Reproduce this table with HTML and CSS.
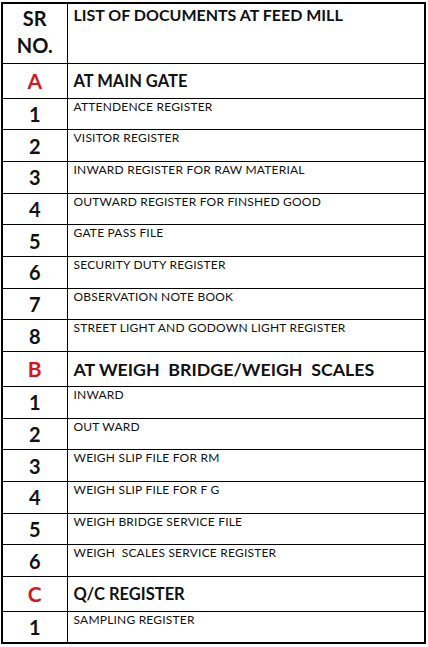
FILE: index.html
```html
<!DOCTYPE html>
<html>
<head>
<meta charset="utf-8">
<link rel="stylesheet" href="styles.css">
</head>
<body>
<table class="docs">
  <colgroup><col class="c-no"><col class="c-item"></colgroup>
  <tr class="head">
    <td class="no">SR<br>NO.</td>
    <td class="title">LIST OF DOCUMENTS AT FEED MILL</td>
  </tr>
  <tr class="sec">
    <td class="no red">A</td>
    <td class="sec-name">AT MAIN GATE</td>
  </tr>
  <tr class="row"><td class="no">1</td><td class="item">ATTENDENCE REGISTER</td></tr>
  <tr class="row"><td class="no">2</td><td class="item">VISITOR REGISTER</td></tr>
  <tr class="row"><td class="no">3</td><td class="item">INWARD REGISTER FOR RAW MATERIAL</td></tr>
  <tr class="row"><td class="no">4</td><td class="item">OUTWARD REGISTER FOR FINSHED GOOD</td></tr>
  <tr class="row"><td class="no">5</td><td class="item">GATE PASS FILE</td></tr>
  <tr class="row"><td class="no">6</td><td class="item">SECURITY DUTY REGISTER</td></tr>
  <tr class="row"><td class="no">7</td><td class="item">OBSERVATION NOTE BOOK</td></tr>
  <tr class="row"><td class="no">8</td><td class="item">STREET LIGHT AND GODOWN LIGHT REGISTER</td></tr>
  <tr class="sec">
    <td class="no red">B</td>
    <td class="sec-name big">AT WEIGH&nbsp; BRIDGE/WEIGH&nbsp; SCALES</td>
  </tr>
  <tr class="row"><td class="no">1</td><td class="item">INWARD</td></tr>
  <tr class="row"><td class="no">2</td><td class="item">OUT WARD</td></tr>
  <tr class="row"><td class="no">3</td><td class="item">WEIGH SLIP FILE FOR RM</td></tr>
  <tr class="row"><td class="no">4</td><td class="item">WEIGH SLIP FILE FOR F G</td></tr>
  <tr class="row"><td class="no">5</td><td class="item">WEIGH BRIDGE SERVICE FILE</td></tr>
  <tr class="row"><td class="no">6</td><td class="item">WEIGH&nbsp; SCALES SERVICE REGISTER</td></tr>
  <tr class="sec">
    <td class="no red">C</td>
    <td class="sec-name">Q/C REGISTER</td>
  </tr>
  <tr class="row"><td class="no">1</td><td class="item">SAMPLING REGISTER</td></tr>
</table>
</body>
</html>
```

FILE: styles.css
```css
html, body {
  margin: 0;
  padding: 0;
  background: #fff;
}

body {
  font-family: Lato, "Liberation Sans", sans-serif;
  color: #111;
}

.docs {
  margin: 2px 0 0 1px;
  width: 425px;
  border-collapse: collapse;
  table-layout: fixed;
  border: 2px solid #000;
}

.c-no { width: 65px; }

.docs td {
  border: 1px solid #000;
  padding: 0;
}

.head { height: 60px; }
.sec { height: 35px; }
.row { height: 31.7px; }

.no {
  text-align: center;
  vertical-align: middle;
  font-weight: 700;
  font-size: 20px;
  line-height: 24px;
}

.head .no {
  line-height: 27px;
  padding-top: 1px;
  vertical-align: top;
}

.red {
  color: #d8161c;
  font-size: 21px;
}

.title {
  vertical-align: top;
  font-weight: 700;
  font-size: 16px;
  padding: 1px 0 0 6px !important;
}

.sec-name {
  vertical-align: middle;
  font-weight: 700;
  font-size: 16.5px;
  padding-left: 6px !important;
}

.sec-name.big {
  font-size: 17.8px;
}

.item {
  vertical-align: top;
  font-size: 12px;
  line-height: 14px;
  letter-spacing: 0.2px;
  padding: 1px 0 0 6px !important;
}
```
